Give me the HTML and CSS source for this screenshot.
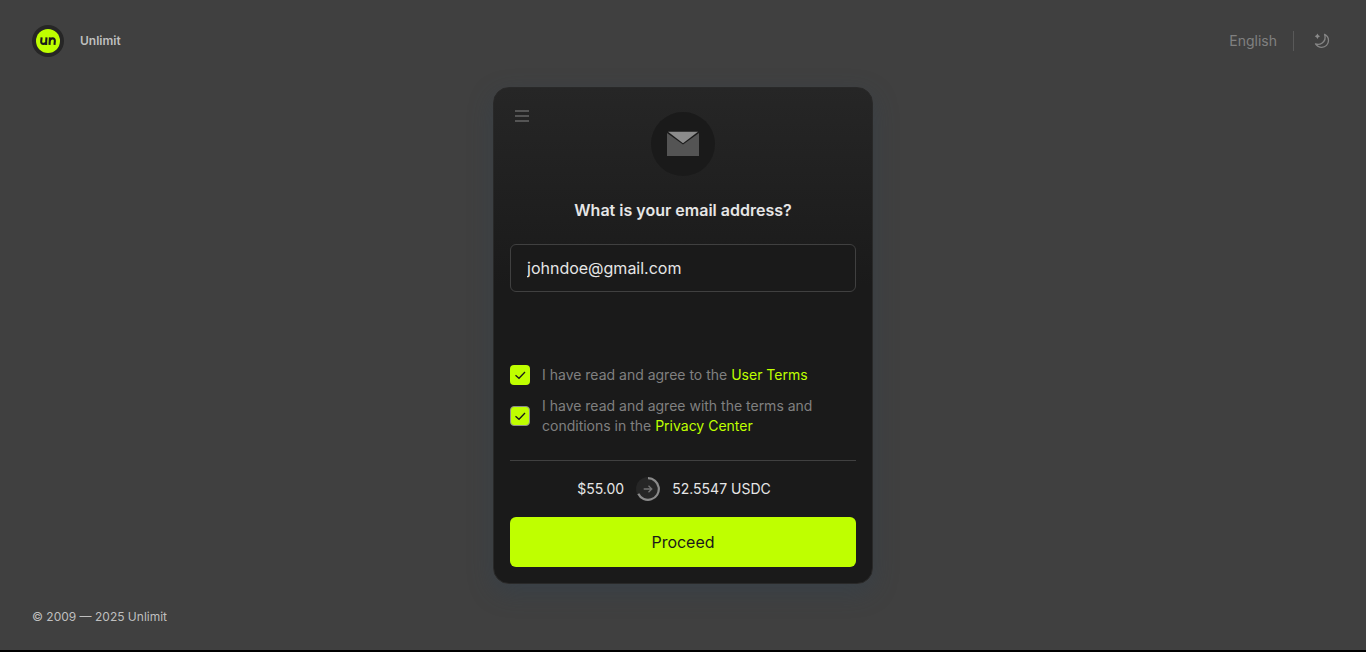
FILE: index.html
```html
<!DOCTYPE html>
<html lang="en">
<head>
<meta charset="utf-8">
<meta name="viewport" content="width=device-width, initial-scale=1">
<title>Unlimit</title>
<link rel="stylesheet" href="styles.css">
</head>
<body class="page">
<header class="header">
  <a class="brand" href="#">
    <svg class="brand-logo" viewBox="0 0 32 32" aria-hidden="true">
      <circle cx="16" cy="16" r="16" fill="#262626"/>
      <circle cx="16" cy="16" r="12" fill="#bfff00"/>
      <g fill="none" stroke="#1a1a1a" stroke-width="2.1" stroke-linejoin="round">
        <path d="M9.6 12.3 9.2 16.4Q9 18.9 11.5 18.9 13.9 18.9 14.2 16.4L14.5 12.3M14.2 16.4V19.9"/>
        <path d="M17.5 19.9 17.9 12.4M17.7 16.4Q18 13.4 20.6 13.4 23 13.4 22.8 16.2L22.5 19.9"/>
      </g>
    </svg>
    <span class="brand-name">Unlimit</span>
  </a>
  <div class="tools">
    <button class="language" type="button">English</button>
    <button class="theme" type="button" aria-label="Switch theme">
      <svg viewBox="0 0 16 16" width="16" height="16" aria-hidden="true">
        <path d="M10.6 1.4Q14.5 3.2 14.5 7.6A6.7 6.7 0 0 1 7.8 14.3Q3.6 14.3 1.5 10.9 5.2 12.2 8.2 10 12.4 6.8 10.6 1.4Z" fill="none" stroke="#858585" stroke-width="1.3" stroke-linejoin="round"/>
        <path d="M3.4.6 4.4 2.3 6.1 3.3 4.4 4.3 3.4 6 2.4 4.3.7 3.3 2.4 2.3Z" fill="#8a8a8a"/>
      </svg>
    </button>
  </div>
</header>
<main class="main">
  <form class="card">
    <div class="card-top">
      <button class="menu" type="button" aria-label="Menu">
        <svg viewBox="0 0 14 12" width="14" height="12" aria-hidden="true"><path d="M0 1h14M0 6h14M0 11h14" stroke="#555" stroke-width="2"/></svg>
      </button>
      <span class="mail">
        <svg viewBox="0 0 32 26" width="32" height="26" aria-hidden="true">
          <path d="M0 2 16 13.6 32 2V25H0Z" fill="#545454"/>
          <path d="M1 .7H31L16 12.2Z" fill="#8c8c8c"/>
        </svg>
      </span>
    </div>
    <label class="title" for="email">What is your email address?</label>
    <input class="email" id="email" type="email" value="johndoe@gmail.com">
    <div class="consents">
      <div class="consent">
        <input class="tick" type="checkbox" id="terms" checked>
        <label for="terms">I have read and agree to the <a class="link" href="#">User Terms</a></label>
      </div>
      <div class="consent">
        <input class="tick tick-outlined" type="checkbox" id="privacy" checked>
        <label for="privacy">I have read and agree with the terms and conditions in the <a class="link" href="#">Privacy Center</a></label>
      </div>
    </div>
    <div class="summary">
      <span>$55.00</span>
      <svg viewBox="0 0 24 24" width="24" height="24" aria-hidden="true">
        <circle cx="12" cy="12" r="12" fill="#262626"/>
        <path d="M12 1.2A10.8 10.8 0 1 1 2.3 16.7" fill="none" stroke="#8a8a8a" stroke-width="2.2"/>
        <path d="M7.7 12h8M12.5 8.7 15.8 12 12.5 15.3" fill="none" stroke="#747474" stroke-width="1.3"/>
      </svg>
      <span>52.5547 USDC</span>
    </div>
    <button class="proceed" type="submit">Proceed</button>
  </form>
</main>
<footer class="footer">© 2009 — 2025 Unlimit</footer>
</body>
</html>
```
FILE: styles.css
```css
* { box-sizing: border-box; }

.page {
  display: flex;
  flex-direction: column;
  min-height: 100vh;
  margin: 0;
  border-bottom: 2px solid #000;
  background: #404040;
  color: #e6e6e6;
  font-family: Inter, "Liberation Sans", sans-serif;
  font-size: 14px;
  line-height: 20px;
}

button, input {
  font: inherit;
  color: inherit;
}

button {
  padding: 0;
  border: 0;
  background: none;
  cursor: pointer;
}

svg { display: block; }

.header {
  display: flex;
  align-items: center;
  justify-content: space-between;
  padding: 25px 32px 30px;
}

.brand {
  display: flex;
  align-items: center;
  gap: 16px;
  color: #bfbfbf;
  font-size: 12px;
  font-weight: 600;
  text-decoration: none;
}

.brand-logo {
  width: 32px;
  height: 32px;
}

.tools {
  display: flex;
  align-items: center;
  color: #808080;
}

.language {
  padding-right: 16px;
  border-right: 1px solid #595959;
}

.theme { padding: 0 4px 0 20px; }

.main {
  display: flex;
  flex: 1;
  align-items: flex-start;
  justify-content: center;
  padding: 0 16px;
}

.card {
  display: flex;
  flex-direction: column;
  width: 100%;
  max-width: 380px;
  padding: 24px 16px 16px;
  border: 1px solid #292929;
  border-radius: 16px;
  background: linear-gradient(#262626, #1a1a1a 40%);
  box-shadow: 0 8px 24px rgba(46, 64, 82, 0.4);
}

.card-top {
  display: grid;
  grid-template-columns: 1fr auto 1fr;
  align-items: start;
}

.menu {
  justify-self: start;
  margin-top: -2px;
  padding: 0 5px;
}

.mail {
  display: grid;
  place-items: center;
  width: 64px;
  height: 64px;
  border-radius: 50%;
  background: #1a1a1a;
}

.title {
  margin: 22px 0;
  font-size: 16px;
  font-weight: 600;
  line-height: 24px;
  text-align: center;
}

.email {
  width: 100%;
  height: 48px;
  padding: 0 16px;
  border: 1px solid #404040;
  border-radius: 6px;
  outline: 0;
  background: #1a1a1a;
  font-size: 16px;
}

.consents {
  display: grid;
  gap: 11px;
  margin-top: 73px;
  padding-bottom: 24px;
  border-bottom: 1px solid #404040;
  color: #808080;
}

.consent {
  display: flex;
  align-items: center;
  gap: 12px;
}

.tick {
  flex: none;
  width: 20px;
  height: 20px;
  margin: 0;
  border-radius: 4px;
  appearance: none;
}

.tick:checked {
  background: #bfff00 url("data:image/svg+xml,%3Csvg xmlns='http://www.w3.org/2000/svg' viewBox='0 0 20 20'%3E%3Cpath d='M5.5 10.2 9 13.3 15 7' fill='none' stroke='%231a1a1a' stroke-width='1.3'/%3E%3C/svg%3E") center / 20px;
}

.tick-outlined { border: 1px solid #8c8c8c; }

.link {
  color: #bfff00;
  text-decoration: none;
}

.summary {
  display: flex;
  justify-content: center;
  align-items: center;
  gap: 12px;
  padding: 16px 18px 16px 0;
}

.proceed {
  height: 50px;
  border-radius: 6px;
  background: #bfff00;
  color: #1a1a1a;
  font-size: 16px;
}

.footer {
  padding: 0 32px 23px;
  color: #bfbfbf;
  font-size: 12px;
}
```
